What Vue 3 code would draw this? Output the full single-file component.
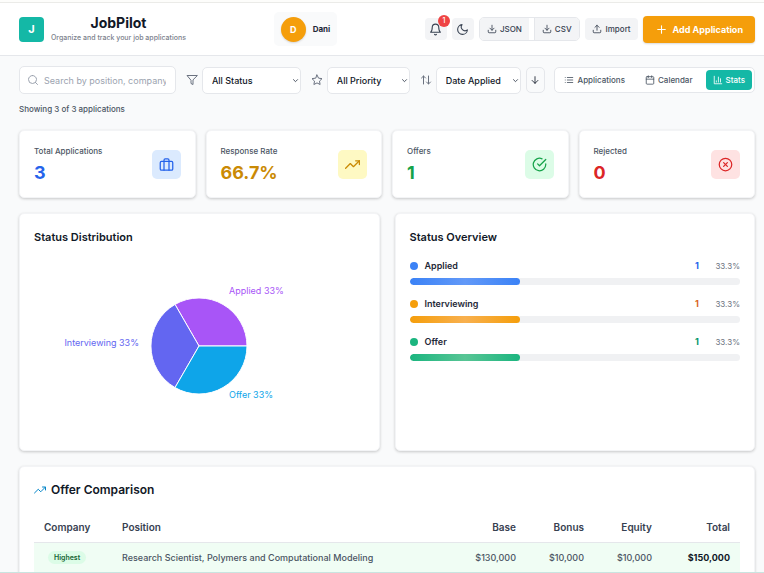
<script setup>
import { ref, h } from 'vue';

// icon paths, 24x24 grid
const paths = {
    bell: ['M18 8a6 6 0 0 0-12 0c0 7-3 9-3 9h18s-3-2-3-9', 'M13.7 21a2 2 0 0 1-3.4 0'],
    moon: ['M21 12.8A9 9 0 1 1 11.2 3 7 7 0 0 0 21 12.8z'],
    download: ['M21 15v4a2 2 0 0 1-2 2H5a2 2 0 0 1-2-2v-4', 'M7 10l5 5 5-5', 'M12 15V3'],
    upload: ['M21 15v4a2 2 0 0 1-2 2H5a2 2 0 0 1-2-2v-4', 'M17 8l-5-5-5 5', 'M12 3v12'],
    plus: ['M12 5v14', 'M5 12h14'],
    search: ['M11 3a8 8 0 1 0 0 16 8 8 0 0 0 0-16z', 'M21 21l-4.3-4.3'],
    filter: ['M22 3H2l8 9.5V19l4 2v-8.5z'],
    star: ['M12 2l3.1 6.3 6.9 1-5 4.9 1.2 6.8-6.2-3.2L5.8 21 7 14.2 2 9.3l6.9-1z'],
    sort: ['M3 8l4-4 4 4', 'M7 4v16', 'M21 16l-4 4-4-4', 'M17 20V4'],
    down: ['M12 4v16', 'M19 13l-7 7-7-7'],
    chevron: ['M5 9l7 7 7-7'],
    list: ['M8 6h13', 'M8 12h13', 'M8 18h13', 'M3 6h.01', 'M3 12h.01', 'M3 18h.01'],
    calendar: ['M5 4h14a2 2 0 0 1 2 2v14a2 2 0 0 1-2 2H5a2 2 0 0 1-2-2V6a2 2 0 0 1 2-2z', 'M16 2v4', 'M8 2v4', 'M3 10h18'],
    chart: ['M3 3v18h18', 'M8 17v-3', 'M13 17V5', 'M18 17V9'],
    briefcase: ['M4 7h16a2 2 0 0 1 2 2v10a2 2 0 0 1-2 2H4a2 2 0 0 1-2-2V9a2 2 0 0 1 2-2z', 'M16 21V5a2 2 0 0 0-2-2h-4a2 2 0 0 0-2 2v16'],
    trend: ['M23 6l-9.5 9.5-5-5L1 18', 'M17 6h6v6'],
    check: ['M22 11.1V12a10 10 0 1 1-5.9-9.1', 'M22 4L12 14l-3-3'],
    cross: ['M12 2a10 10 0 1 0 0 20 10 10 0 0 0 0-20z', 'M15 9l-6 6', 'M9 9l6 6'],
};

const Icon = (props) => h('svg', {
    class: 'icon',
    viewBox: '0 0 24 24',
    'aria-hidden': 'true',
}, paths[props.name].map((d) => h('path', { d })));
Icon.props = ['name'];

const search = ref('');
const status = ref('All Status');
const priority = ref('All Priority');
const sortBy = ref('Date Applied');
const view = ref('Stats');

const views = [
    { name: 'Applications', icon: 'list' },
    { name: 'Calendar', icon: 'calendar' },
    { name: 'Stats', icon: 'chart' },
];

const stats = [
    { label: 'Total Applications', value: '3', icon: 'briefcase', tone: 'blue' },
    { label: 'Response Rate', value: '66.7%', icon: 'trend', tone: 'yellow' },
    { label: 'Offers', value: '1', icon: 'check', tone: 'green' },
    { label: 'Rejected', value: '0', icon: 'cross', tone: 'red' },
];

const overview = [
    { name: 'Applied', count: 1, percent: 33.3 },
    { name: 'Interviewing', count: 1, percent: 33.3 },
    { name: 'Offer', count: 1, percent: 33.3 },
];

const offers = [
    {
        position: 'Research Scientist, Polymers and Computational Modeling',
        base: '$130,000',
        bonus: '$10,000',
        equity: '$10,000',
        total: '$150,000',
    },
];
</script>

<template>
    <div class="app">
        <header class="header">
            <div class="brand">
                <div class="logo">J</div>
                <div class="brand-text">
                    <h1>JobPilot</h1>
                    <p>Organize and track your job applications</p>
                </div>
            </div>
            <div class="user">
                <span class="avatar">D</span>
                <span>Dani</span>
            </div>
            <div class="actions">
                <button class="icon-btn" aria-label="Notifications">
                    <Icon name="bell" />
                    <span class="badge">1</span>
                </button>
                <button class="icon-btn" aria-label="Dark mode"><Icon name="moon" /></button>
                <div class="export">
                    <button><Icon name="download" />JSON</button>
                    <button><Icon name="download" />CSV</button>
                </div>
                <button class="import"><Icon name="upload" />Import</button>
                <button class="add"><Icon name="plus" />Add Application</button>
            </div>
        </header>

        <main class="main">
            <div class="toolbar">
                <label class="search">
                    <Icon name="search" />
                    <input v-model="search" type="text" aria-label="Search" placeholder="Search by position, company" />
                </label>
                <label class="filter status">
                    <Icon name="filter" />
                    <span class="select">
                        <select v-model="status" aria-label="Status">
                            <option>All Status</option>
                            <option>Applied</option>
                            <option>Interviewing</option>
                            <option>Offer</option>
                        </select>
                        <Icon name="chevron" class="chevron" />
                    </span>
                </label>
                <label class="filter priority">
                    <Icon name="star" />
                    <span class="select">
                        <select v-model="priority" aria-label="Priority">
                            <option>All Priority</option>
                            <option>High</option>
                            <option>Low</option>
                        </select>
                        <Icon name="chevron" class="chevron" />
                    </span>
                </label>
                <label class="filter sort">
                    <Icon name="sort" />
                    <span class="select">
                        <select v-model="sortBy" aria-label="Sort by">
                            <option>Date Applied</option>
                            <option>Company</option>
                        </select>
                        <Icon name="chevron" class="chevron" />
                    </span>
                </label>
                <button class="direction" aria-label="Descending"><Icon name="down" /></button>
                <div class="views">
                    <button
                        v-for="v in views"
                        :key="v.name"
                        :class="{ active: view === v.name }"
                        @click="view = v.name"
                    >
                        <Icon :name="v.icon" />{{ v.name }}
                    </button>
                </div>
            </div>
            <p class="showing">Showing 3 of 3 applications</p>

            <section class="stats">
                <div v-for="s in stats" :key="s.label" class="card stat" :class="s.tone">
                    <div>
                        <p class="stat-label">{{ s.label }}</p>
                        <p class="stat-value">{{ s.value }}</p>
                    </div>
                    <span class="stat-icon"><Icon :name="s.icon" /></span>
                </div>
            </section>

            <section class="charts">
                <div class="card">
                    <h2>Status Distribution</h2>
                    <svg class="pie" viewBox="0 0 330 179" role="img" aria-label="Status distribution">
                        <g stroke="#fff">
                            <path d="M165 90h48A48 48 0 0 0 141 48.4z" fill="#a855f7" />
                            <path d="M165 90L141 48.4A48 48 0 0 0 141 131.6z" fill="#6366f1" />
                            <path d="M165 90L141 131.6A48 48 0 0 0 213 90z" fill="#0ea5e9" />
                        </g>
                        <text x="195" y="38" fill="#a855f7">Applied 33%</text>
                        <text x="105" y="90" fill="#6366f1" text-anchor="end">Interviewing 33%</text>
                        <text x="195" y="142" fill="#0ea5e9">Offer 33%</text>
                    </svg>
                </div>
                <div class="card">
                    <h2>Status Overview</h2>
                    <ul class="overview">
                        <li v-for="o in overview" :key="o.name" :class="o.name.toLowerCase()">
                            <div class="row">
                                <span class="dot"></span>
                                <span class="name">{{ o.name }}</span>
                                <span class="count">{{ o.count }}</span>
                                <span class="percent">{{ o.percent }}%</span>
                            </div>
                            <div class="track">
                                <div class="bar" :style="{ width: o.percent + '%' }"></div>
                            </div>
                        </li>
                    </ul>
                </div>
            </section>

            <section class="card offers">
                <h2><Icon name="trend" />Offer Comparison</h2>
                <table>
                    <thead>
                        <tr>
                            <th class="company">Company</th>
                            <th>Position</th>
                            <th class="num wide">Base</th>
                            <th class="num">Bonus</th>
                            <th class="num">Equity</th>
                            <th class="num wide">Total</th>
                        </tr>
                    </thead>
                    <tbody>
                        <tr v-for="o in offers" :key="o.position">
                            <td><span class="highest">Highest</span></td>
                            <td>{{ o.position }}</td>
                            <td class="num">{{ o.base }}</td>
                            <td class="num">{{ o.bonus }}</td>
                            <td class="num">{{ o.equity }}</td>
                            <td class="num total">{{ o.total }}</td>
                        </tr>
                    </tbody>
                </table>
            </section>
        </main>
    </div>
</template>

<style>
body{
    margin: 0;
}
</style>

<style scoped>
*{
    box-sizing: border-box;
}
.app{
    height: 100vh;
    display: flex;
    flex-direction: column;
    border-top: 2px solid #fdfdfb;
    border-bottom: 1px solid #c9e4e0;
    background: #f9fafb;
    color: #111827;
    font-family: Inter, "Liberation Sans", sans-serif;
    font-size: 9px;
}
h1, h2, p, ul{
    margin: 0;
    padding: 0;
}
button, input, select{
    font: inherit;
    color: inherit;
    margin: 0;
}
button{
    display: flex;
    align-items: center;
    justify-content: center;
    gap: 3px;
    padding: 0;
    border: 0;
    font-size: 8px;
    font-weight: 500;
    white-space: nowrap;
    cursor: pointer;
}
.icon{
    width: 10px;
    height: 10px;
    flex: none;
    fill: none;
    stroke: currentColor;
    stroke-width: 2;
    stroke-linecap: round;
    stroke-linejoin: round;
}

/* header */
.header{
    flex: none;
    display: flex;
    align-items: center;
    justify-content: space-between;
    height: 54px;
    padding: 0 9px 0 19px;
    background: #fff;
    border-top: 1px solid #ebebe8;
    border-bottom: 1px solid #e5e7eb;
}
.brand{
    display: flex;
    align-items: center;
    gap: 7px;
}
.logo{
    display: grid;
    place-items: center;
    width: 25px;
    height: 25px;
    border-radius: 4px;
    background: #14b8a6;
    color: #fff;
    font-size: 11px;
    font-weight: 700;
}
.brand-text{
    text-align: center;
}
.brand h1{
    font-size: 14px;
    line-height: 18px;
    font-weight: 700;
}
.brand p{
    font-size: 7px;
    line-height: 12px;
    font-weight: 500;
    color: #7b818c;
}
.user{
    display: flex;
    align-items: center;
    gap: 7px;
    height: 34px;
    padding: 0 7px;
    border-radius: 5px;
    background: #f9fafb;
    color: #1f2937;
    font-size: 8px;
    font-weight: 700;
}
.avatar{
    display: grid;
    place-items: center;
    width: 25px;
    height: 25px;
    border-radius: 50%;
    background: #f59e0b;
    color: #fff;
    font-size: 9px;
    box-shadow: 0 1px 2px rgba(0, 0, 0, 0.15);
}
.actions{
    display: flex;
    align-items: center;
    gap: 5px;
    color: #374151;
}
.icon-btn{
    position: relative;
    width: 22px;
    height: 22px;
    border-radius: 4px;
    background: #f3f4f6;
}
.icon-btn .icon{
    width: 13px;
    height: 13px;
}
.badge{
    position: absolute;
    top: -3px;
    right: -3px;
    width: 12px;
    height: 12px;
    border-radius: 50%;
    background: #ef4444;
    color: #fff;
    font-size: 7px;
    line-height: 12px;
}
.export{
    display: flex;
    gap: 5px;
    height: 24px;
    border: 1px solid #e5e7eb;
    border-radius: 5px;
    overflow: hidden;
}
.export button{
    padding: 0 7px;
    background: #f3f4f6;
}
.export button + button{
    border-left: 1px solid #e5e7eb;
}
.import{
    gap: 4px;
    height: 22px;
    padding: 0 7px;
    border-radius: 4px;
    background: #f3f4f6;
}
.add{
    gap: 5px;
    height: 27px;
    padding: 0 12px;
    border-radius: 4px;
    background: #f59e0b;
    color: #fff;
    font-size: 9px;
    font-weight: 700;
    box-shadow: 0 1px 2px rgba(0, 0, 0, 0.15);
}
.add .icon{
    width: 13px;
    height: 13px;
}

/* filters */
.main{
    flex: 1;
    min-height: 0;
    padding: 10px 9px 15px 19px;
    overflow-y: auto;
    scrollbar-width: none;
}
.toolbar{
    display: flex;
    align-items: center;
    justify-content: space-between;
}
.search{
    display: flex;
    align-items: center;
    gap: 5px;
    flex: 0 1 157px;
    height: 28px;
    padding: 0 9px 0 7px;
    border: 1px solid #e5e7eb;
    border-radius: 5px;
    background: #fff;
    color: #9ca3af;
}
.search .icon{
    width: 12px;
    height: 12px;
}
.search input{
    width: 100%;
    min-width: 0;
    padding: 0;
    border: 0;
    outline: 0;
    background: none;
    color: #111827;
    font-size: 9px;
}
.search input::placeholder{
    color: #9ca3af;
}
.filter{
    display: flex;
    align-items: center;
    gap: 4px;
    color: #6b7280;
}
.filter .icon{
    width: 12px;
    height: 12px;
}
.select{
    position: relative;
    display: flex;
}
.select select{
    appearance: none;
    width: 99px;
    height: 27px;
    padding: 0 9px;
    border: 1px solid #e5e7eb;
    border-radius: 5px;
    background: #fff;
    color: #111827;
    font-size: 9px;
    font-weight: 500;
}
.priority select{
    width: 83px;
}
.sort select{
    width: 85px;
}
.select .chevron{
    position: absolute;
    top: 10px;
    right: 2px;
    width: 7px;
    height: 7px;
    color: #374151;
    stroke-width: 3;
    pointer-events: none;
}
.direction{
    width: 19px;
    height: 26px;
    margin-left: -5px;
    border: 1px solid #e5e7eb;
    border-radius: 5px;
    background: #f9fafb;
}
.views{
    display: flex;
    height: 26px;
    padding: 2px;
    gap: 6px;
    border: 1px solid #e5e7eb;
    border-radius: 5px;
    background: #fff;
}
.views button{
    padding: 0 7px;
    border-radius: 4px;
    background: none;
    color: #4b5563;
}
.views .active{
    background: #14b8a6;
    color: #fff;
}
.showing{
    margin: 8px 0 14px;
    font-size: 8px;
    line-height: 14px;
    font-weight: 500;
    color: #4b5563;
}

/* cards */
.card{
    padding: 15px;
    border: 1px solid #f3f4f6;
    border-radius: 5px;
    background: #fff;
    box-shadow: 0 1px 3px rgba(0, 0, 0, 0.2);
}
h2{
    font-size: 11px;
    line-height: 16px;
    font-weight: 600;
}
.stats{
    display: grid;
    grid-template-columns: repeat(4, 1fr);
    gap: 10px;
    margin-bottom: 15px;
}
.stat{
    display: flex;
    align-items: center;
    justify-content: space-between;
    padding: 13px 14px;
}
.stat-label{
    font-size: 8px;
    line-height: 14px;
    font-weight: 500;
    color: #4b5563;
}
.stat-value{
    margin-top: 4px;
    font-size: 18px;
    line-height: 22px;
    font-weight: 700;
}
.stat-icon{
    display: grid;
    place-items: center;
    width: 29px;
    height: 29px;
    border-radius: 5px;
}
.stat-icon .icon{
    width: 15px;
    height: 15px;
}
.blue .stat-value, .blue .icon{
    color: #2563eb;
}
.blue .stat-icon{
    background: #dbeafe;
}
.yellow .stat-value, .yellow .icon{
    color: #ca8a04;
}
.yellow .stat-icon{
    background: #fef9c3;
}
.green .stat-value, .green .icon{
    color: #16a34a;
}
.green .stat-icon{
    background: #dcfce7;
}
.red .stat-value, .red .icon{
    color: #dc2626;
}
.red .stat-icon{
    background: #fee2e2;
}

/* charts */
.charts{
    display: grid;
    grid-template-columns: 1fr 1fr;
    gap: 15px;
    margin-bottom: 15px;
}
.charts .card{
    padding: 15px 14px;
}
.pie{
    display: block;
    width: 330px;
    max-width: 100%;
    margin: 11px auto 0;
    font-size: 9px;
}
.overview{
    display: grid;
    gap: 12px;
    margin-top: 14px;
    list-style: none;
}
.row{
    display: flex;
    align-items: center;
    line-height: 14px;
    margin-bottom: 5px;
}
.dot{
    width: 8px;
    height: 8px;
    margin-right: 7px;
    border-radius: 50%;
    background: var(--color);
}
.name{
    flex: 1;
    color: #1f2937;
    font-weight: 600;
}
.count{
    color: var(--count);
    font-weight: 700;
}
.percent{
    width: 41px;
    font-size: 8px;
    color: #6b7280;
    text-align: right;
}
.track{
    height: 7px;
    border-radius: 4px;
    background: #f0f1f3;
    overflow: hidden;
}
.bar{
    height: 100%;
    border-radius: 4px;
    background: linear-gradient(90deg, var(--color), var(--light), var(--color));
}
.applied{
    --color: #3b82f6;
    --light: #6299f8;
    --count: #2563eb;
}
.interviewing{
    --color: #f59e0b;
    --light: #f8b04f;
    --count: #d9631e;
}
.offer{
    --color: #1bb57f;
    --light: #58c595;
    --count: #059669;
}

/* offers table */
.offers{
    padding: 15px 14px;
}
.offers h2{
    display: flex;
    align-items: center;
    gap: 5px;
    margin-bottom: 14px;
    font-size: 12px;
}
.offers h2 .icon{
    width: 12px;
    height: 12px;
    color: #0284c7;
}
table{
    width: 100%;
    table-layout: fixed;
    border-collapse: collapse;
    color: #374151;
}
th, td{
    height: 30px;
    padding: 0 10px;
    text-align: left;
    white-space: nowrap;
}
th{
    font-size: 10px;
    font-weight: 600;
}
td{
    font-size: 9px;
    font-weight: 500;
    color: #4b5563;
}
.company, .wide{
    width: 78px;
}
.num{
    text-align: right;
}
th.num:not(.wide){
    width: 68px;
}
tbody tr{
    border-top: 1px solid #e5e7eb;
    background: #f0fdf4;
}
.total{
    color: #111827;
    font-weight: 700;
}
.highest{
    display: inline-block;
    margin-left: 4px;
    padding: 0 6px;
    border-radius: 7px;
    background: #dcfce7;
    color: #166534;
    font-size: 7px;
    line-height: 13px;
    font-weight: 600;
}
</style>
